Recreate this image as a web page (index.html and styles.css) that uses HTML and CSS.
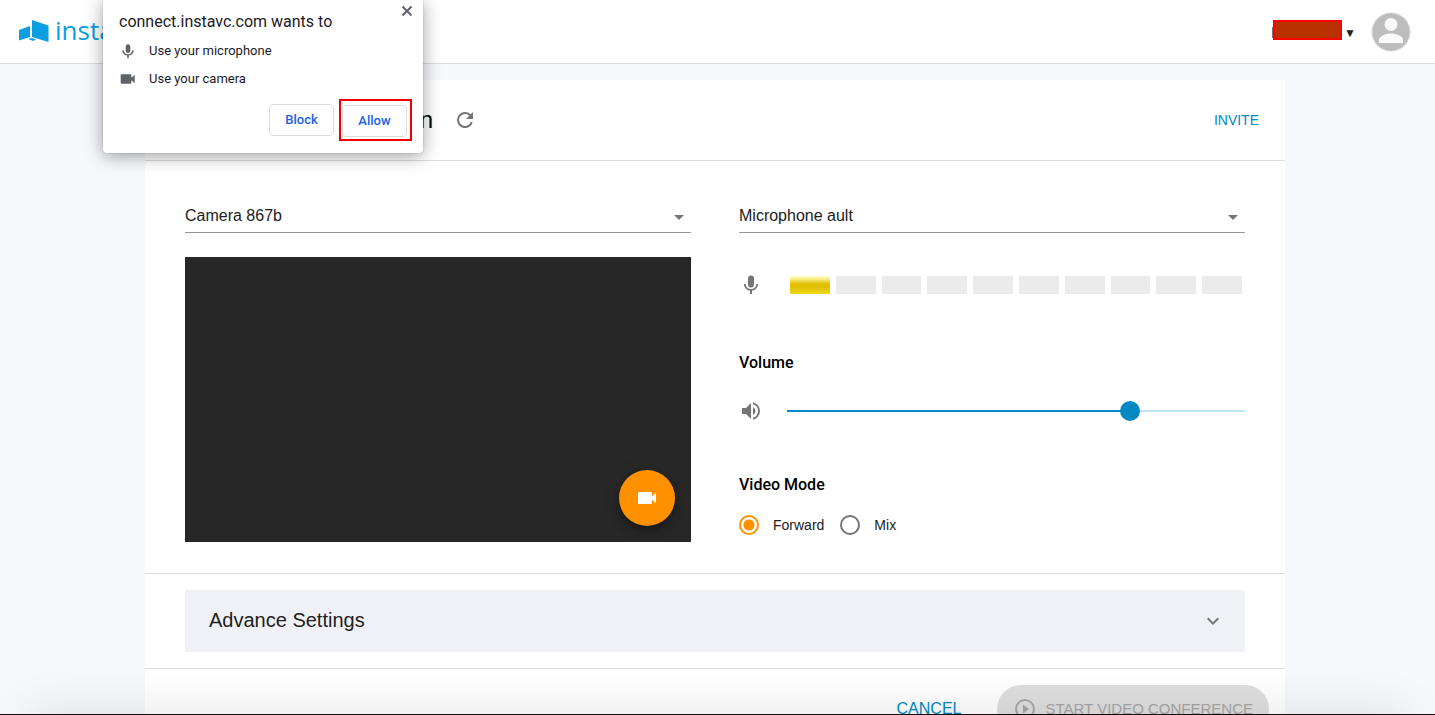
FILE: index.html
```html
<!DOCTYPE html>
<html lang="en">
<head>
<meta charset="utf-8">
<title>InstaVC</title>
<link rel="stylesheet" href="styles.css">
</head>
<body>
<header class="topbar">
  <a class="brand" href="#">
    <svg class="brand-mark" viewBox="0 0 30 24" aria-hidden="true"><path d="M0 10 11 6v11L0 20.500zM13 0l16.500 5.500V22L13 17z"/><path d="M9 19l4-1 4 1.500-3 1.500z"/></svg>
    <span class="brand-name">instavc</span>
  </a>
  <div class="account">
    <span class="redacted"></span>
    <button class="account-menu" aria-label="Account menu">▼</button>
    <svg class="avatar" viewBox="0 0 40 40" aria-hidden="true"><circle cx="20" cy="20" r="19" fill="#bdbdbd" stroke="#dcd8d0"/><circle cx="20" cy="12.500" r="6.500" fill="#fafafa"/><path d="M8 31v-3c0-4 7-6.500 12-6.500s12 2.500 12 6.500v3z" fill="#fafafa"/></svg>
  </div>
</header>

<main class="page">
  <div class="card">
  <div class="card-head">
    <h1 class="card-title">Configuration</h1>
    <button class="icon-button" aria-label="Refresh"><svg class="icon" viewBox="0 0 24 24"><path d="M17.650 6.350A7.960 7.960 0 0 0 12 4a8 8 0 1 0 7.730 10h-2.080A6 6 0 1 1 12 6c1.660 0 3.140.69 4.220 1.780L13 11h7V4z"/></svg></button>
    <button class="link-button invite">INVITE</button>
  </div>

  <div class="devices">
    <section class="camera">
      <div class="select-wrap"><select class="select" aria-label="Camera"><option>Camera 867b</option></select></div>
      <div class="preview">
        <button class="camera-toggle" aria-label="Toggle camera"><svg class="icon" viewBox="0 0 24 24"><path d="M17 10.500V7a1 1 0 0 0-1-1H4a1 1 0 0 0-1 1v10a1 1 0 0 0 1 1h12a1 1 0 0 0 1-1v-3.500l4 4v-11z"/></svg></button>
      </div>
    </section>

    <section class="audio">
      <div class="select-wrap"><select class="select" aria-label="Microphone"><option>Microphone ault</option></select></div>
      <div class="row level-row">
        <svg class="icon" viewBox="0 0 24 24"><path d="M12 14.500a3 3 0 0 0 3-3v-6a3 3 0 0 0-6 0v6a3 3 0 0 0 3 3zm5.300-3.500c0 3-2.540 5.100-5.300 5.100S6.700 14 6.700 11H5c0 3.410 2.720 6.230 6 6.720V21h2v-3.280c3.280-.48 6-3.300 6-6.720z"/></svg>
        <div class="level"><i class="bar on"></i><i class="bar"></i><i class="bar"></i><i class="bar"></i><i class="bar"></i><i class="bar"></i><i class="bar"></i><i class="bar"></i><i class="bar"></i><i class="bar"></i></div>
      </div>
      <h2 class="label"><label for="volume">Volume</label></h2>
      <div class="row">
        <svg class="icon" viewBox="0 0 24 24"><path d="M3 9v6h4l5 5V4L7 9zm13.500 3A4.500 4.500 0 0 0 14 7.970v8.050A4.470 4.470 0 0 0 16.500 12zM14 3.230v2.060a7 7 0 0 1 0 13.420v2.060a9 9 0 0 0 0-17.540z"/></svg>
        <input class="slider" id="volume" type="range" min="0" max="100" value="76">
      </div>
      <h2 class="label" id="mode">Video Mode</h2>
      <div class="modes" role="radiogroup" aria-labelledby="mode">
        <label class="mode"><input class="radio" type="radio" name="mode" checked>Forward</label>
        <label class="mode"><input class="radio" type="radio" name="mode">Mix</label>
      </div>
    </section>
  </div>

  <div class="advanced">
    <button class="expander">Advance Settings<svg class="icon chevron" viewBox="0 0 24 24"><path d="M16.590 8.590 12 13.170 7.410 8.590 6 10l6 6 6-6z"/></svg></button>
  </div>

  <div class="actions">
    <button class="link-button cancel">CANCEL</button>
    <button class="start" disabled><svg class="icon" viewBox="0 0 24 24"><path d="M10 16.500l6-4.500-6-4.500zM12 2a10 10 0 1 0 0 20 10 10 0 0 0 0-20zm0 18a8 8 0 1 1 0-16 8 8 0 0 1 0 16z"/></svg>START VIDEO CONFERENCE</button>
  </div>
  </div>
</main>

<div class="prompt" role="dialog" aria-labelledby="prompt-title">
  <button class="prompt-close" aria-label="Close"><svg viewBox="0 0 12 12"><path d="M1.500 1.500l9 9M10.500 1.500l-9 9"/></svg></button>
  <p class="prompt-title" id="prompt-title">connect.instavc.com wants to</p>
  <ul class="permissions">
    <li class="permission"><svg class="prompt-icon" viewBox="0 0 24 24"><path d="M12 15a3.500 3.500 0 0 0 3.500-3.500v-6a3.500 3.500 0 0 0-7 0v6A3.500 3.500 0 0 0 12 15zm6.500-4c0 3.500-3 6-6.500 6s-6.500-2.500-6.500-6H3.300c0 4 3.200 7.300 7.500 7.900V23h2.400v-4.100c4.300-.6 7.500-3.900 7.500-7.900z"/></svg>Use your microphone</li>
    <li class="permission"><svg class="prompt-icon" viewBox="0 0 24 24"><path d="M17 10V6.500A1.500 1.500 0 0 0 15.500 5h-13A1.500 1.500 0 0 0 1 6.500v11A1.500 1.500 0 0 0 2.500 19h13a1.500 1.500 0 0 0 1.500-1.500V14l5 4.500v-13z"/></svg>Use your camera</li>
  </ul>
  <div class="prompt-actions">
    <button class="prompt-button">Block</button>
    <span class="highlight"><button class="prompt-button">Allow</button></span>
  </div>
</div>
<div class="window-edge"></div>
</body>
</html>
```
FILE: styles.css
```css
* { box-sizing: border-box; }

body {
  margin: 0;
  height: 100vh;
  overflow: hidden;
  background: #f6f8fb;
  color: #212121;
  font-family: "Liberation Sans", Arial, sans-serif;
}

button {
  margin: 0;
  padding: 0;
  border: 0;
  background: none;
  font: inherit;
  color: inherit;
}

.icon {
  flex: none;
  display: block;
  width: 24px;
  height: 24px;
  fill: #757575;
}

/* Top bar */
.topbar {
  display: flex;
  align-items: center;
  justify-content: space-between;
  height: 64px;
  padding: 0 24px 0 19px;
  background: #fff;
  border-bottom: 1px solid #dedede;
}
.brand {
  display: flex;
  align-items: center;
  gap: 6px;
  color: #0a9fe0;
  font: 26px/32px "Open Sans", sans-serif;
  text-decoration: none;
}
.brand-mark { width: 30px; height: 24px; fill: #0a9fe0; }
.brand-name { padding-bottom: 4px; }
.account { display: flex; align-items: center; }
.redacted {
  position: relative;
  width: 69px;
  height: 20px;
  margin-bottom: 4px;
  background: #b83200;
  border: 2px solid #f00;
}
.redacted::before {
  content: "";
  position: absolute;
  left: -3px;
  top: 5px;
  width: 1px;
  height: 11px;
  background: #777;
}
.account-menu { width: 16px; padding-top: 2px; font-size: 12px; }
.avatar { width: 40px; height: 40px; margin-left: 13px; }

/* Card */
.page { padding: 16px 5px 0 0; }
.card {
  max-width: 1140px;
  margin: 0 auto;
  background: #fff;
}
.card-head {
  display: flex;
  align-items: center;
  height: 81px;
  padding: 0 26px 0 40px;
  border-bottom: 1px solid #dedede;
}
.card-title {
  min-width: 248px;
  margin: 0;
  color: #000;
  font-size: 24px;
  font-weight: 400;
  text-align: right;
}
.icon-button { margin-left: 20px; }
.link-button { color: #0288c3; }
.invite { margin-left: auto; font-size: 14px; }

/* Devices */
.devices {
  display: grid;
  grid-template-columns: 1fr 1fr;
  gap: 48px;
  padding: 40px 40px 31px;
}
.select-wrap { position: relative; }
.select-wrap::after {
  content: "";
  position: absolute;
  right: 7px;
  top: 14px;
  border: 5px solid transparent;
  border-top-color: #757575;
  border-bottom: 0;
  pointer-events: none;
}
.select {
  appearance: none;
  display: block;
  width: 100%;
  height: 32px;
  padding: 0 24px 2px 0;
  border: 0;
  border-bottom: 1px solid #949494;
  border-radius: 0;
  background: none;
  color: #212121;
  font: 16px "Liberation Sans", Arial, sans-serif;
}
.preview {
  display: flex;
  align-items: flex-end;
  justify-content: flex-end;
  aspect-ratio: 16 / 9;
  margin-top: 24px;
  padding: 16px;
  background: #272727;
}
.camera-toggle {
  display: grid;
  place-items: center;
  width: 56px;
  height: 56px;
  border-radius: 50%;
  background: #ff9100;
  box-shadow: 0 3px 5px -1px rgba(0, 0, 0, .2), 0 6px 10px rgba(0, 0, 0, .14), 0 1px 18px rgba(0, 0, 0, .12);
}
.camera-toggle .icon { fill: #fff; }

.row { display: flex; align-items: center; gap: 24px; }
.level-row { margin-top: 40px; }
.level { flex: 1; display: flex; gap: 6px; padding: 0 3px; }
.bar { flex: 1; height: 18px; background: #ebebeb; }
.bar.on { background: linear-gradient(#fffbd0 0%, #fff59a 12%, #dfbd00 45%, #e0c000 60%, #f0da18 100%); }
.label {
  margin: 50px 0 24px;
  color: #000;
  font: 500 16px/24px Roboto, sans-serif;
}
.level-row + .label { margin-top: 54px; }
.slider {
  appearance: none;
  flex: 1;
  min-width: 0;
  height: 20px;
  margin: 0;
  background: linear-gradient(90deg, #0288c3 75%, #bfe5f0 75%) center / 100% 2px no-repeat;
}
.slider::-webkit-slider-thumb {
  appearance: none;
  width: 20px;
  height: 20px;
  border-radius: 50%;
  background: #0288c3;
}
.modes { display: flex; gap: 16px; margin-top: -6px; }
.mode { display: flex; align-items: center; gap: 14px; font-size: 14px; }
.radio {
  appearance: none;
  width: 20px;
  height: 20px;
  margin: 0;
  border: 2px solid #757575;
  border-radius: 50%;
}
.radio:checked {
  border-color: #ff9100;
  background: radial-gradient(circle, #ff9100 5px, transparent 6px);
}

/* Lower sections */
.advanced {
  padding: 16px 40px;
  border: solid #dedede;
  border-width: 1px 0;
}
.expander {
  display: flex;
  align-items: center;
  justify-content: space-between;
  width: 100%;
  height: 62px;
  padding: 0 20px 0 24px;
  background: #f0f1f6;
  font-size: 20px;
}
.actions {
  display: flex;
  align-items: center;
  justify-content: flex-end;
  gap: 36px;
  padding: 16px;
}
.cancel { font-size: 16px; }
.start {
  display: flex;
  align-items: center;
  gap: 8px;
  height: 48px;
  padding: 0 16px;
  border-radius: 24px;
  background: #dfdfdf;
  color: #a6a6a6;
  font-size: 15px;
}
.start .icon { fill: #a6a6a6; }

/* Permission prompt */
.prompt {
  position: absolute;
  top: 0;
  left: 103px;
  width: 320px;
  padding: 12px 11px 12px 16px;
  border-radius: 0 0 3px 3px;
  background: #fff;
  box-shadow: 0 0 1px rgba(0, 0, 0, .5), 0 3px 18px rgba(0, 0, 0, .38);
  color: #1b1b1f;
  font: 13px/20px Roboto, sans-serif;
}
.prompt-close { position: absolute; top: 5px; right: 10px; }
.prompt-close svg {
  display: block;
  width: 12px;
  height: 12px;
  fill: none;
  stroke: #5f6368;
  stroke-width: 2;
}
.prompt-title { margin: 0 0 9px; font-size: 16px; }
.permissions {
  display: grid;
  gap: 8px;
  margin: 0 0 10px;
  padding: 0;
  list-style: none;
}
.permission { display: flex; align-items: center; gap: 13px; padding-left: 1px; }
.prompt-icon { width: 16px; height: 16px; fill: #5f6368; }
.prompt-actions {
  display: flex;
  align-items: center;
  justify-content: flex-end;
  gap: 5px;
}
.highlight { padding: 4px 3px 2px 1px; border: 2px solid #f00000; }
.prompt-button {
  display: block;
  width: 65px;
  height: 32px;
  border: 1px solid #dadce0;
  border-radius: 4px;
  background: #fff;
  color: #1a5fe8;
  font-weight: 500;
}

/* Dark line and shade along the lower window edge */
.window-edge {
  position: fixed;
  inset: auto 0 0;
  height: 1px;
  background: #1a0a10;
}
.window-edge::before {
  content: "";
  position: absolute;
  inset: 0 50px;
  box-shadow: 0 20px 50px 20px rgba(0, 0, 0, .12);
}
```
